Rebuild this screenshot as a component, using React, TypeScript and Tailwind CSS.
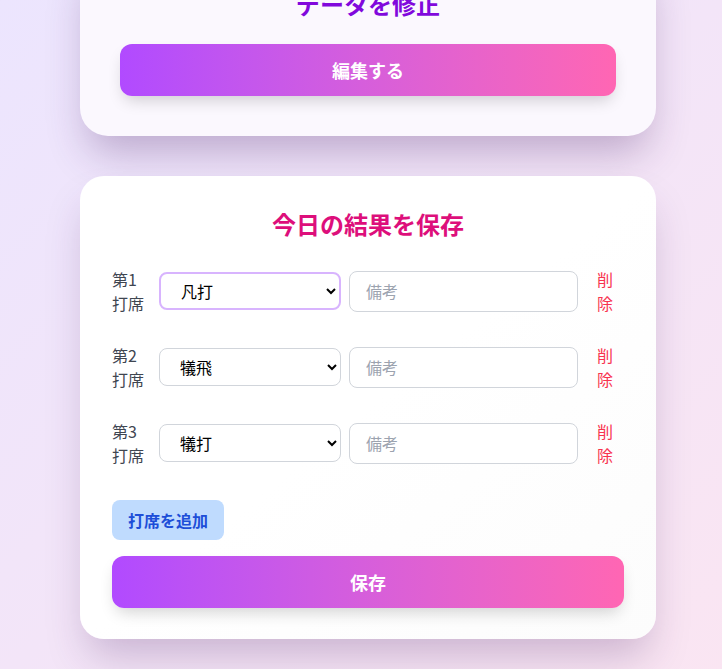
import React from "react";

const font = { fontFamily: '"Noto Sans CJK JP", "Noto Sans", sans-serif' };

function Row({ n, value, focused }: { n: number; value: string; focused?: boolean }) {
  return (
    <div className="flex items-center h-[48px]">
      <div className="w-[39px] text-base leading-6 text-[#3f4651]">
        第{n}
        <br />
        打席
      </div>
      <select
        defaultValue={value}
        className={
          "ml-[8px] w-[182px] h-[38px] rounded-lg bg-white pl-[16px] pr-2 text-base text-black outline-none " +
          (focused ? "border-2 border-[#d8b4fe]" : "border border-[#d1d5db]")
        }
        style={font}
      >
        <option>凡打</option>
        <option>犠飛</option>
        <option>犠打</option>
      </select>
      <input
        placeholder="備考"
        className="ml-[8px] w-[229px] h-[41px] rounded-lg border border-[#d1d5db] bg-white px-4 text-base placeholder:text-[#9ca3af] outline-none"
        style={font}
      />
      <button className="ml-[8px] w-[38px] px-[11px] text-base leading-6 text-[#f8334f] text-left">
        削除
      </button>
    </div>
  );
}

export default function App() {
  return (
    <div
      className="min-h-screen w-full overflow-hidden bg-gradient-to-br from-[#ece5fe] to-[#fae5f2]"
      style={font}
    >
      <div className="ml-[80px] w-[576px] mt-[-52px] pb-10">
        <div className="rounded-[28px] bg-[#fbf8fe] px-10 py-10 shadow-[0_24px_40px_-8px_rgba(70,30,100,0.3)]">
          <h2 className="text-center text-2xl leading-8 font-bold text-[#8108dc] mb-6">データを修正</h2>
          <button className="w-full h-[52px] rounded-xl bg-gradient-to-r from-[#b14aff] to-[#ff66b3] text-white font-bold text-lg shadow-[0_8px_16px_-4px_rgba(0,0,0,0.18)]">
            編集する
          </button>
        </div>

        <div className="mt-[40px] rounded-3xl bg-gradient-to-br from-white via-white to-[#fcfcfc] px-8 pt-8 pb-[31px] shadow-[0_24px_40px_-8px_rgba(70,30,100,0.25)]">
          <h2 className="text-center text-2xl leading-8 font-bold text-[#dd0f7b] mb-[27px]">今日の結果を保存</h2>
          <div className="flex flex-col gap-[28px]">
            <Row n={1} value="凡打" focused />
            <Row n={2} value="犠飛" />
            <Row n={3} value="犠打" />
          </div>
          <button className="mt-[33px] h-[40px] px-4 rounded-lg bg-[#bfdbfe] text-[#1d4ed8] font-bold text-base">
            打席を追加
          </button>
          <button className="mt-4 block w-full h-[52px] rounded-xl bg-gradient-to-r from-[#b14aff] to-[#ff66b3] text-white font-bold text-lg shadow-[0_8px_16px_-4px_rgba(0,0,0,0.18)]">
            保存
          </button>
        </div>
      </div>
    </div>
  );
}
